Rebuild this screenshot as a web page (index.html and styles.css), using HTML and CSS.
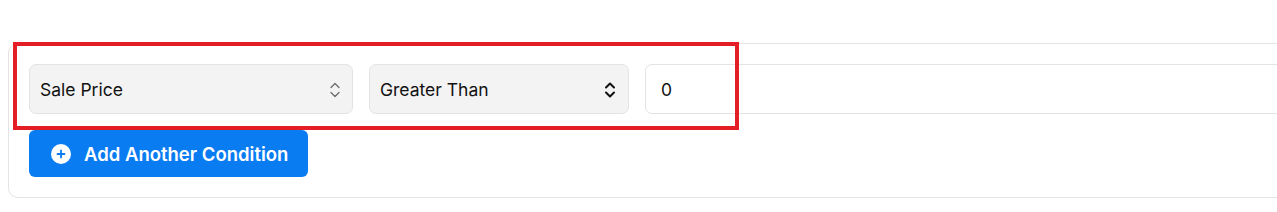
FILE: index.html
```html
<!DOCTYPE html>
<html lang="en">
<head>
<meta charset="utf-8">
<title>Condition</title>
<link rel="stylesheet" href="styles.css">
</head>
<body>
<div class="page">
  <section class="card">
    <div class="highlight"></div>
    <div class="row">
      <div class="select select-field">
        <span class="select-text">Sale Price</span>
        <svg class="chev chev-light" width="12" height="18" viewBox="0 0 12 18" aria-hidden="true">
          <path d="M2 6.5 L6 2.5 L10 6.5" fill="none" stroke="#6b6b6b" stroke-width="1.3" stroke-linecap="round" stroke-linejoin="round"/>
          <path d="M2 11.5 L6 15.5 L10 11.5" fill="none" stroke="#6b6b6b" stroke-width="1.3" stroke-linecap="round" stroke-linejoin="round"/>
        </svg>
      </div>
      <div class="select select-op">
        <span class="select-text">Greater Than</span>
        <svg class="chev" width="12" height="18" viewBox="0 0 12 18" aria-hidden="true">
          <path d="M2 6.5 L6 2.5 L10 6.5" fill="none" stroke="#111" stroke-width="2" stroke-linecap="round" stroke-linejoin="round"/>
          <path d="M2 11.5 L6 15.5 L10 11.5" fill="none" stroke="#111" stroke-width="2" stroke-linecap="round" stroke-linejoin="round"/>
        </svg>
      </div>
      <div class="value-input">0</div>
    </div>
    <button class="add-btn" type="button">
      <svg class="plus" width="20" height="20" viewBox="0 0 20 20" aria-hidden="true">
        <circle cx="10" cy="10" r="10" fill="#fff"/>
        <path d="M10 6.5 V13.5 M6.5 10 H13.5" stroke="#0a7cf2" stroke-width="1.8" stroke-linecap="round"/>
      </svg>
      <span>Add Another Condition</span>
    </button>
  </section>
</div>
</body>
</html>
```
FILE: styles.css
```css
html, body {
  margin: 0;
  padding: 0;
  background: #fff;
  overflow: hidden;
}
body {
  font-family: Inter, "Noto Sans", sans-serif;
  color: #111;
}
.page {
  padding: 43px 0 0 8px;
}
.card {
  position: relative;
  width: 1340px;
  box-sizing: border-box;
  border: 1px solid #e4e4e4;
  border-radius: 10px;
  padding: 20px 20px 20px 20px;
  display: flex;
  flex-direction: column;
  align-items: flex-start;
  gap: 16px;
}
.highlight {
  position: absolute;
  left: 4px;
  top: -2px;
  width: 726px;
  height: 88px;
  box-sizing: border-box;
  border: 4px solid #e41e25;
  pointer-events: none;
}
.row {
  display: flex;
  gap: 16px;
  width: 100%;
}
.select {
  height: 50px;
  box-sizing: border-box;
  background: #f3f3f3;
  border: 1px solid #e3e3e3;
  border-radius: 7px;
  display: flex;
  align-items: center;
  justify-content: space-between;
  padding: 1px 11px 0 10px;
  font-size: 17.5px;
}
.select-field {
  width: 324px;
}
.select-op {
  width: 260px;
  padding-right: 12px;
}
.select-text {
  line-height: 1;
}
.chev {
  display: block;
}
.value-input {
  flex: 1;
  height: 50px;
  box-sizing: border-box;
  border: 1px solid #e3e3e3;
  border-radius: 7px;
  background: #fff;
  display: flex;
  align-items: center;
  padding: 1px 0 0 15px;
  font-size: 17.5px;
}
.add-btn {
  height: 47px;
  border: none;
  border-radius: 6px;
  background: #0a7cf2;
  color: #fff;
  font-family: Inter, "Noto Sans", sans-serif;
  font-weight: 600;
  font-size: 18.5px;
  display: flex;
  align-items: center;
  gap: 13px;
  padding: 0 20px 0 22px;
  cursor: pointer;
}
.plus {
  display: block;
}
```
